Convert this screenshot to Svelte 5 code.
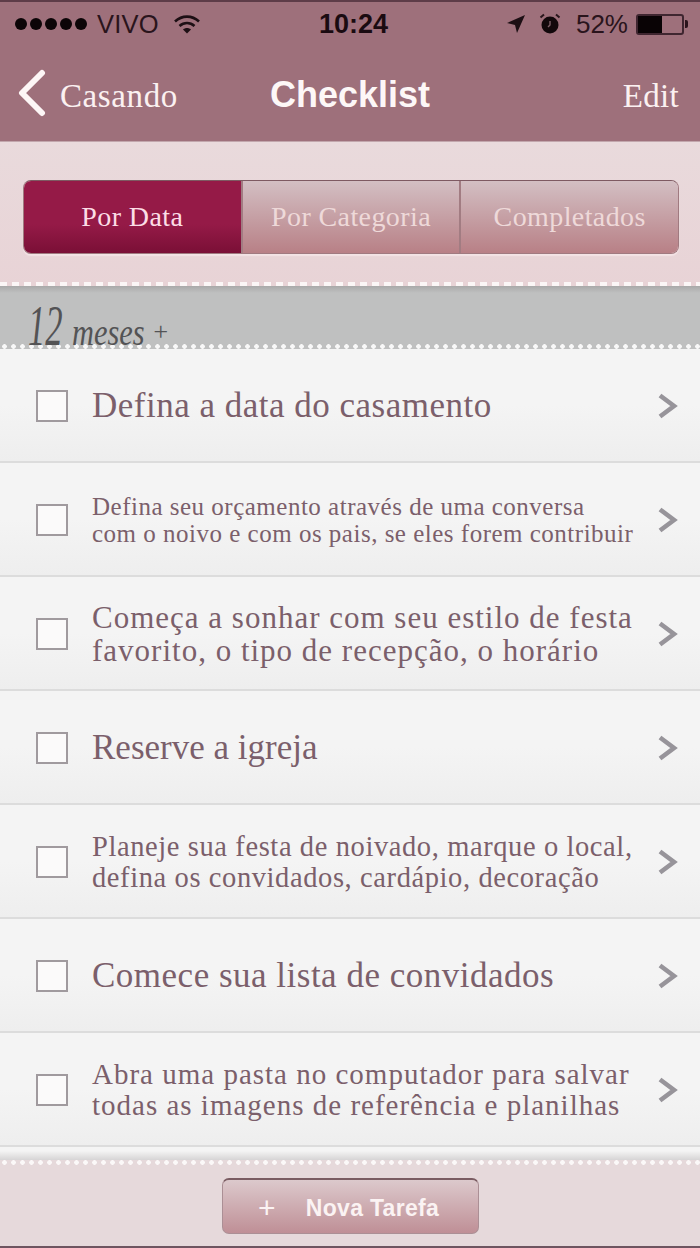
<script lang="ts">
  interface Task {
    lines: string[];
    size: "lg" | "lt" | "md" | "sm" | "xs" | "xm";
  }

  const tasks: Task[] = [
    { lines: ["Defina a data do casamento"], size: "lg" },
    { lines: ["Defina seu orçamento através de uma conversa", "com o noivo e com os pais, se eles forem contribuir"], size: "sm" },
    { lines: ["Começa a sonhar com seu estilo de festa", "favorito, o tipo de recepção, o horário"], size: "md" },
    { lines: ["Reserve a igreja"], size: "lt" },
    { lines: ["Planeje sua festa de noivado, marque o local,", "defina os convidados, cardápio, decoração"], size: "xs" },
    { lines: ["Comece sua lista de convidados"], size: "lg" },
    { lines: ["Abra uma pasta no computador para salvar", "todas as imagens de referência e planilhas"], size: "xm" },
  ];

  const tabs = ["Por Data", "Por Categoria", "Completados"];
  let activeTab = $state(0);
</script>

<div class="screen">
  <header class="top">
    <div class="status">
      <div class="status-left">
        <span class="dots"><i></i><i></i><i></i><i></i><i></i></span>
        <span class="carrier">VIVO</span>
        <svg class="wifi" width="28" height="22" viewBox="0 0 28 22" fill="none" stroke="#1d0f14" stroke-width="2.6">
          <path d="M2 8.5C9 2 19 2 26 8.5" />
          <path d="M6.5 13C11 9 17 9 21.5 13" />
          <path d="M10 16.5l4 4 4-4c-2.4-2-5.6-2-8 0z" fill="#1d0f14" stroke="none" />
        </svg>
      </div>
      <span class="time">10:24</span>
      <div class="status-right">
        <svg width="20" height="20" viewBox="0 0 20 20"><path d="M19 1L1 9l8 2 2 8z" fill="#1d0f14" /></svg>
        <svg class="alarm" width="24" height="24" viewBox="0 0 24 24">
          <circle cx="12" cy="13" r="8.5" fill="#12080b" />
          <path d="M12 9v4l-2 2" stroke="#7d6068" stroke-width="1.4" fill="none" />
          <path d="M2.5 5.5L6 2.5M21.5 5.5L18 2.5" stroke="#2a171d" stroke-width="2" />
        </svg>
        <span class="pct">52%</span>
        <span class="battery"><span class="charge"></span></span>
        <span class="nub"></span>
      </div>
    </div>
    <nav class="nav">
      <a class="back" href="#back">
        <svg width="30" height="48" viewBox="0 0 30 48" fill="none" stroke="#fdf6f6" stroke-width="6" stroke-linecap="round" stroke-linejoin="round">
          <path d="M25 4L5 24l20 20" />
        </svg>
        <span>Casando</span>
      </a>
      <h1>Checklist</h1>
      <a class="edit" href="#edit">Edit</a>
    </nav>
  </header>

  <section class="filters">
    <div class="segments">
      {#each tabs as tab, i}
        <button class:active={activeTab === i} onclick={() => (activeTab = i)}>{tab}</button>
      {/each}
    </div>
    <div class="dashes"></div>
  </section>

  <div class="period">
    <span class="num">12</span>
    <span class="label">meses</span>
    <span class="plus">+</span>
  </div>

  <ul class="tasks">
    {#each tasks as task}
      <li>
        <span class="box"></span>
        <p class={task.size}>
          {#each task.lines as line}
            <span>{line}</span>
          {/each}
        </p>
        <svg class="chev" width="20" height="26" viewBox="0 0 20 26" fill="none" stroke="#97949a" stroke-width="4.6">
          <path d="M2 2.5L16 13 2 23.5" />
        </svg>
      </li>
    {/each}
  </ul>

  <footer class="bottom">
    <div class="shade"></div>
    <div class="beads"></div>
    <div class="actions">
      <button class="add"><span class="add-plus">+</span><span>Nova Tarefa</span></button>
    </div>
  </footer>
</div>

<style>
  :global(body) {
    margin: 0;
    background: #f2f2f2;
  }

  .screen {
    width: 700px;
    height: 1248px;
    display: flex;
    flex-direction: column;
    overflow: hidden;
    font-family: "Liberation Serif", serif;
  }

  .top {
    height: 142px;
    flex-shrink: 0;
    box-sizing: border-box;
    background: #9e707b;
    border-top: 2px solid #5e3c48;
    border-bottom: 1px solid #c2a7ad;
  }

  .status {
    display: flex;
    align-items: center;
    justify-content: space-between;
    height: 44px;
    padding: 0 12px 0 15px;
    font-family: "Liberation Sans", sans-serif;
    color: #2a141c;
  }

  .status-left,
  .status-right {
    display: flex;
    align-items: center;
    width: 250px;
  }

  .status-right {
    justify-content: flex-end;
    gap: 8px;
  }

  .dots {
    display: flex;
    gap: 3px;
  }

  .dots i {
    width: 12px;
    height: 12px;
    border-radius: 50%;
    background: #0c0507;
  }

  .carrier {
    font-size: 25.5px;
    margin-left: 10px;
    letter-spacing: 0.2px;
  }

  .wifi {
    margin-left: 14px;
  }

  .time {
    font-size: 27px;
    font-weight: 700;
    color: #1a0b11;
    margin-left: 4px;
  }

  .alarm {
    margin-left: 4px;
  }

  .pct {
    font-size: 26px;
    margin-left: 6px;
  }

  .battery {
    width: 44px;
    height: 17px;
    border: 2px solid #3f2630;
    border-radius: 3px;
    display: block;
    margin-right: -5px;
  }

  .charge {
    display: block;
    width: 24px;
    height: 100%;
    background: #090305;
  }

  .nub {
    width: 3px;
    height: 8px;
    background: #2a141c;
    border-radius: 0 2px 2px 0;
    margin-left: -2px;
  }

  .nav {
    position: relative;
    display: flex;
    align-items: center;
    justify-content: space-between;
    height: 92px;
    padding: 2px 21px 0 17px;
    box-sizing: border-box;
    color: #fbf1f1;
  }

  .back {
    display: flex;
    align-items: center;
    gap: 13px;
    color: inherit;
    text-decoration: none;
    font-size: 33px;
    letter-spacing: 0.6px;
  }

  .back span {
    margin-top: 6px;
  }

  .edit {
    color: inherit;
    text-decoration: none;
    font-size: 33px;
    letter-spacing: 0.3px;
    margin-top: 6px;
  }

  h1 {
    position: absolute;
    left: 0;
    right: 0;
    top: 27px;
    margin: 0;
    text-align: center;
    font-family: "Liberation Sans", sans-serif;
    font-size: 36px;
    font-weight: 700;
    line-height: 44px;
    color: #fdf7f7;
  }

  .filters {
    height: 144px;
    flex-shrink: 0;
    box-sizing: border-box;
    padding: 38px 21px 0 23px;
    background: linear-gradient(#e9dadc, #e8d3d6);
    display: flex;
    flex-direction: column;
  }

  .segments {
    display: flex;
    height: 74px;
    flex-shrink: 0;
    border-radius: 8px;
    overflow: hidden;
    border: 1px solid #a07a80;
    border-top-color: #7e5a62;
    box-sizing: border-box;
    box-shadow: 0 2px 1px #f3e3e5;
  }

  .segments button {
    flex: 1;
    border: 0;
    border-left: 2px solid #a27c82;
    padding: 0;
    font: 28px "Liberation Serif", serif;
    letter-spacing: 0.4px;
    color: #eed9d9;
    background: linear-gradient(#d3bfc3, #b88086);
  }

  .segments button:first-child {
    border-left: 0;
  }

  .segments button.active {
    color: #fcdde6;
    background: linear-gradient(#951a47 60%, #7a0f36);
  }

  .dashes {
    height: 4px;
    margin: 28px -21px 0 -23px;
    background: repeating-linear-gradient(90deg, #fbf6f6 0 7px, transparent 7px 12px);
  }

  .period {
    height: 63px;
    flex-shrink: 0;
    box-sizing: border-box;
    display: flex;
    align-items: baseline;
    padding: 15px 0 0 28px;
    background:
      radial-gradient(circle, #f8f8f8 2px, transparent 2.6px) 0 100% / 9px 5px repeat-x,
      linear-gradient(#a9a9a9, #bfc0c0 7px);
    color: #535355;
    font-style: italic;
    line-height: 50px;
    white-space: nowrap;
  }

  .period span {
    display: inline-block;
    transform-origin: left bottom;
  }

  .num {
    font-size: 56px;
    transform: scaleX(0.62);
    margin-right: -12px;
  }

  .label {
    font-size: 38px;
    transform: scaleX(0.8);
    margin-right: -11px;
  }

  .plus {
    font-size: 26px;
    transform: translateY(-5px);
  }

  .tasks {
    list-style: none;
    margin: 0;
    padding: 0;
    flex-shrink: 0;
  }

  .tasks li {
    height: 114px;
    box-sizing: border-box;
    display: flex;
    align-items: center;
    padding: 1px 22px 0 36px;
    border-bottom: 2px solid #dcdcdc;
    background: linear-gradient(#f4f4f4 50%, #eeeeee);
    color: #7b5f6b;
  }

  .box {
    width: 28px;
    height: 28px;
    flex-shrink: 0;
    background: #fbfafa;
    border: 2px solid #a09a9e;
    margin-right: 24px;
  }

  .tasks p {
    flex: 1;
    margin: 0;
    white-space: nowrap;
  }

  .tasks p span {
    display: block;
  }

  .lg {
    font-size: 35px;
    line-height: 40px;
    letter-spacing: 0.5px;
  }

  .lt {
    font-size: 35px;
    line-height: 40px;
  }

  .md {
    font-size: 31px;
    line-height: 33px;
    letter-spacing: 1px;
  }

  .sm {
    font-size: 25px;
    line-height: 27px;
    letter-spacing: 0.5px;
  }

  .xs {
    font-size: 28.5px;
    line-height: 31px;
    letter-spacing: 0.6px;
  }

  .xm {
    font-size: 29px;
    line-height: 31px;
    letter-spacing: 1px;
  }

  .bottom {
    flex: 1;
    display: flex;
    flex-direction: column;
    background: #e6d9db;
    box-sizing: border-box;
    border-bottom: 2px solid #6e5560;
  }

  .shade {
    height: 13px;
    background: linear-gradient(#f4f4f4 30%, #d6d4d5);
  }

  .beads {
    height: 5px;
    background: radial-gradient(circle, #fbf8f8 2px, transparent 2.6px) 0 0 / 9px 5px repeat-x;
  }

  .actions {
    display: flex;
    justify-content: center;
    padding-top: 13px;
  }

  .add {
    width: 257px;
    height: 56px;
    display: flex;
    align-items: center;
    justify-content: center;
    gap: 30px;
    border: 1px solid #ab8f95;
    border-top: 2px solid #7a5c62;
    border-radius: 7px;
    background: linear-gradient(#dcc9cc, #bf8f96);
    color: #fbf3f3;
    font: 700 23px "Liberation Sans", sans-serif;
    letter-spacing: 0.3px;
    padding: 3px 3px 0 0;
  }

  .add-plus {
    font-weight: 400;
    font-size: 30px;
  }
</style>
